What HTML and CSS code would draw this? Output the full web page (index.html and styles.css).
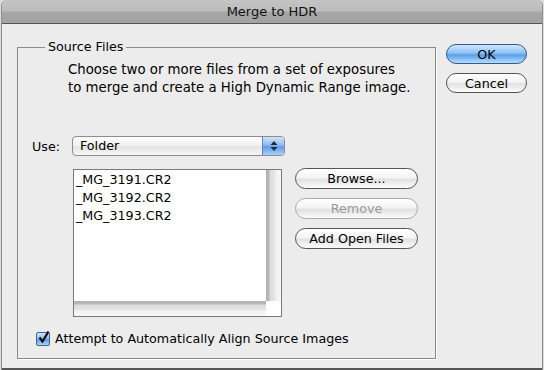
FILE: index.html
```html
<!DOCTYPE html>
<html>
 <head>
  <meta charset="utf-8">
  <link rel="stylesheet" href="styles.css">
 </head>
 <body>
  <div class="window">
   <div class="titlebar">Merge to HDR</div>
   <div class="content">
    <fieldset class="group">
     <legend class="legend">Source Files</legend>
     <p class="desc">Choose two or more files from a set of exposures<br>to merge and create a High Dynamic Range image.</p>

     <div class="use-row">
      <span class="label">Use:</span>
      <div class="select">
       <span class="select-text">Folder</span>
       <span class="select-arrows">
        <svg width="8" height="12" viewBox="0 0 8 12">
         <path d="M4 1 L7.5 5 L0.5 5 Z" fill="#1d2a3a"/>
         <path d="M4 11 L7.5 7 L0.5 7 Z" fill="#1d2a3a"/>
        </svg>
       </span>
      </div>
     </div>

     <div class="files-row">
      <div class="listbox">
       <div class="list-main">
        <ul class="files">
         <li>_MG_3191.CR2</li>
         <li>_MG_3192.CR2</li>
         <li>_MG_3193.CR2</li>
        </ul>
        <div class="vscroll"></div>
       </div>
       <div class="list-bottom">
        <div class="hscroll"></div>
        <div class="corner"></div>
       </div>
      </div>
      <div class="list-buttons">
       <button class="button">Browse...</button>
       <button class="button disabled">Remove</button>
       <button class="button">Add Open Files</button>
      </div>
     </div>

     <label class="check-row">
      <span class="checkbox">
       <svg width="14" height="14" viewBox="0 0 14 14">
        <path d="M2.5 6.5 L5.5 10.5 L11.5 0.5" fill="none" stroke="#111" stroke-width="2.2"/>
       </svg>
      </span>
      Attempt to Automatically Align Source Images
     </label>
    </fieldset>

    <div class="side">
     <button class="button default">OK</button>
     <button class="button">Cancel</button>
    </div>
   </div>
  </div>
 </body>
</html>
```

FILE: styles.css
```css
body {
  margin: 0;
  background: #dcdcdc;
  font-family: 'DejaVu Sans', sans-serif;
  font-size: 12.7px;
  color: #000;
}

.window {
  width: 540px;
  height: 368px;
  margin: 0 2px;
  background: #ececec;
  border-bottom: 2px solid #555;
  box-shadow: -1px 0 0 #8e8e8e, 1px 0 0 #8e8e8e;
  border-radius: 6px 6px 0 0;
  overflow: hidden;
}

.titlebar {
  height: 23px;
  line-height: 24px;
  text-align: center;
  font-size: 13px;
  color: #111;
  background: linear-gradient(#c4c4c4 0, #bcbcbc 11px, #a6a6a6 12px, #a2a2a2 23px);
  border-bottom: 1px solid #565656;
}

.content {
  display: flex;
  align-items: flex-start;
  padding-left: 15px;
}

.group {
  width: 419px;
  height: 320px;
  box-sizing: border-box;
  margin: 15px 0 0 0;
  padding: 0 0 0 14px;
  border: 1px solid #8a8a8a;
  box-shadow: 1px 1px 0 #fff;
}

.legend {
  padding: 0 3px;
  margin-left: 13px;
  line-height: 16px;
}

.desc {
  margin: 6px 0 0 36px;
  line-height: 18px;
  font-size: 13.3px;
}

.use-row {
  display: flex;
  align-items: center;
  margin-top: 39px;
}

.label {
  width: 40px;
}

.select {
  display: flex;
  align-items: stretch;
  width: 213px;
  height: 20px;
  box-sizing: border-box;
  border: 1px solid #8d8d8d;
  border-radius: 4px;
  background: linear-gradient(#fdfdfd, #f2f2f2 45%, #e4e4e4 55%, #f6f6f6);
  overflow: hidden;
}

.select-text {
  flex: 1;
  padding-left: 7px;
  line-height: 18px;
}

.select-arrows {
  width: 21px;
  display: flex;
  align-items: center;
  justify-content: center;
  border-left: 1px solid #5d86b8;
  background: linear-gradient(#cfe3fb, #8dbcf0 45%, #5f9ce6 55%, #a9d2fb);
}

.files-row {
  display: flex;
  align-items: flex-start;
  margin-top: 13px;
  padding-left: 41px;
}

.listbox {
  width: 209px;
  height: 148px;
  box-sizing: border-box;
  border: 1px solid #7a7a7a;
  background: #fff;
  display: flex;
  flex-direction: column;
}

.list-main {
  flex: 1;
  display: flex;
}

.files {
  flex: 1;
  list-style: none;
  margin: 0;
  padding: 1px 0 0 2px;
}

.files li {
  line-height: 18px;
}

.vscroll {
  width: 15px;
  background: linear-gradient(90deg, #b1b1b1 0, #b8b8b8 3px, #dcdcdc 4px, #e6e6e6 9px, #f2f2f2 10px, #f6f6f6 15px);
}

.list-bottom {
  display: flex;
  height: 15px;
}

.hscroll {
  flex: 1;
  background: linear-gradient(#b1b1b1 0, #b8b8b8 3px, #dcdcdc 4px, #e6e6e6 9px, #f2f2f2 10px, #f6f6f6 15px);
}

.corner {
  width: 15px;
  background: #fff;
}

.list-buttons {
  display: flex;
  flex-direction: column;
  gap: 9px;
  margin-left: 13px;
  margin-top: -1px;
}

.button {
  font-family: 'DejaVu Sans', sans-serif;
  font-size: 12.7px;
  color: #000;
  width: 123px;
  height: 21px;
  padding: 0;
  border: 1px solid #555;
  border-radius: 11px;
  background: linear-gradient(#ffffff, #f4f4f4 45%, #e2e2e2 55%, #fbfbfb);
}

.button.disabled {
  color: #9a9a9a;
  border-color: #aaa;
}

.button.default {
  border-color: #2f5c94;
  background: linear-gradient(#d3e7fc, #8cc0f4 45%, #5a9fea 55%, #b6dcfd);
}

.side {
  display: flex;
  flex-direction: column;
  gap: 9px;
  margin: 20px 0 0 10px;
}

.side .button {
  width: 81px;
  height: 20px;
}

.check-row {
  display: flex;
  align-items: center;
  gap: 5px;
  margin-top: 14px;
  margin-left: 4px;
}

.checkbox {
  width: 14px;
  height: 14px;
  box-sizing: border-box;
  border: 1px solid #3f6592;
  border-radius: 2px;
  background: linear-gradient(#d0e5fb, #8bbdf1 45%, #5c9de7 55%, #acd4fb);
  position: relative;
}

.checkbox svg {
  position: absolute;
  left: 0;
  top: -2px;
}
```
